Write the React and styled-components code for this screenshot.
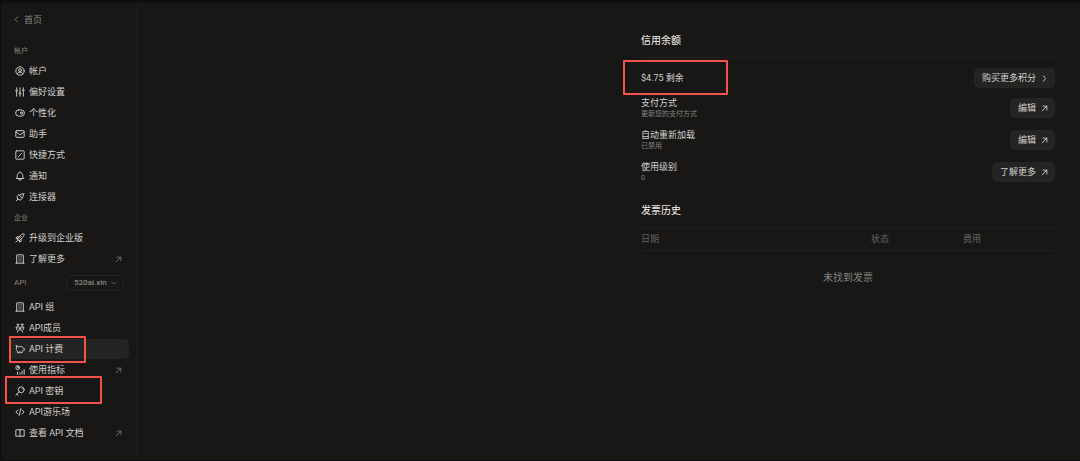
import React from "react";
import styled, { createGlobalStyle, css } from "styled-components";

const GlobalStyle = createGlobalStyle`
  * { box-sizing: border-box; }
  body {
    margin: 0;
    background: #100e13;
    color: #d2d1ce;
    font-family: Roboto, "Noto Sans CJK SC", sans-serif;
    font-size: 9px;
    line-height: 12px;
  }
  a { color: inherit; text-decoration: none; }
  ul { list-style: none; margin: 0; padding: 0; }
  h2, p { margin: 0; }
`;

const Shell = styled.div`
  display: flex;
  min-height: calc(100vh - 4px);
  margin: 3px 0 1px 1px;
  background: #181715;
  border-radius: 4px 0 0 4px;
`;

const Sidebar = styled.aside`
  flex: 0 0 136px;
  padding: 6px 7px 16px 8px;
  border-right: 1px solid #1f1e1d;
`;

const BackLink = styled.a`
  display: flex;
  align-items: center;
  gap: 3px;
  height: 21px;
  margin-bottom: 10px;
  padding-left: 3px;
  color: #8c8b88;
`;

const SectionHead = styled.div`
  display: flex;
  align-items: center;
  justify-content: space-between;
  height: ${(p) => (p.$tall ? "28px" : "21px")};
  padding: 0 5px;
  color: #858481;
  font-size: ${(p) => (p.$tall ? "8px" : "7px")};
`;

const Menu = styled.ul`
  display: grid;
  gap: 1px;
`;

const MenuItem = styled.li`
  position: relative;
`;

const MenuLink = styled.a`
  display: flex;
  align-items: center;
  gap: 4px;
  height: 20px;
  padding: 0 7px 0 6px;
  border-radius: 5px;
  color: #d2d1ce;
  white-space: nowrap;
  ${(p) => p.$active && css`background: #242423;`}
`;

const External = styled.span`
  display: flex;
  margin-left: auto;
  color: #777673;
`;

const Marker = styled.span`
  position: absolute;
  border: 2px solid #f4524d;
  border-radius: 1px;
  pointer-events: none;
  top: ${(p) => p.$top}px;
  left: ${(p) => p.$left}px;
  width: ${(p) => p.$width}px;
  height: ${(p) => p.$height}px;
`;

const SelectBox = styled.label`
  display: flex;
  align-items: center;
  width: 58px;
  height: 16px;
  padding: 0 6px 0 7px;
  border: 1px solid #252423;
  border-radius: 5px;
`;

const GroupSelect = styled.select`
  appearance: none;
  flex: 1;
  min-width: 0;
  padding: 0;
  border: 0;
  background: transparent;
  color: #858481;
  font: 500 8px/12px Roboto, sans-serif;
`;

const Main = styled.main`
  display: flex;
  flex: 1;
  justify-content: flex-end;
  min-width: 0;
  padding: 27px 25px 0;
`;

const Column = styled.div`
  width: 100%;
  max-width: 414px;
`;

const Title = styled.h2`
  height: 27px;
  padding-top: 4px;
  font-size: 10px;
  line-height: 14px;
  font-weight: 500;
  color: #dddcd9;
`;

const Balance = styled.div`
  padding: 10px 0;
  border-top: 1px solid #22211f;
`;

const Settings = styled.div`
  display: grid;
  gap: 12px;
  padding-bottom: 18px;
`;

const Row = styled.div`
  position: relative;
  display: flex;
  align-items: center;
  justify-content: space-between;
  height: 20px;
`;

const Hint = styled.p`
  color: #858481;
  font-size: 7px;
  line-height: 10px;
`;

const Button = styled.button`
  display: flex;
  align-items: center;
  gap: 5px;
  height: 20px;
  padding: 0 7px 0 8px;
  border: 0;
  border-radius: 5px;
  background: #242423;
  color: #d2d1ce;
  font: inherit;
`;

const Table = styled.table`
  width: 100%;
  table-layout: fixed;
  border-collapse: collapse;
`;

const HeadCell = styled.th`
  height: 23px;
  padding: 0;
  border: solid #22211f;
  border-width: 1px 0;
  color: #656461;
  font-weight: 400;
  text-align: left;
  width: ${(p) => p.$width || "auto"};
`;

const EmptyCell = styled.td`
  height: 54px;
  padding: 0;
  color: #858481;
  font-size: 10px;
  text-align: center;
`;

const Svg = styled.svg`
  flex: none;
  display: block;
  fill: none;
  stroke: currentColor;
  stroke-width: 2.3;
  stroke-linecap: round;
  stroke-linejoin: round;
`;

const shapes = {
  back: <path d="M15 5l-7 7 7 7" />,
  right: <path strokeWidth="3" d="M8 3l8 9-8 9" />,
  down: <path d="M3 8l9 8 9-8" />,
  external: <path strokeWidth="3" d="M4 20L20 4M7 4h13v13" />,
  user: <><circle cx="12" cy="12" r="10" /><circle cx="12" cy="10" r="3.5" /><path d="M5.5 19c1-3 3-4 6.5-4s5.5 1 6.5 4" /></>,
  sliders: <path d="M4 2v4M4 12v10M12 2v10M12 18v4M20 2v3M20 11v11M2 9a2 2 0 104 0 2 2 0 10-4 0M10 15a2 2 0 104 0 2 2 0 10-4 0M18 8a2 2 0 104 0 2 2 0 10-4 0" />,
  toggle: <><rect x="1.5" y="4.5" width="21" height="15" rx="7.5" /><circle cx="15.500" cy="12" r="2.500" /></>,
  mail: <><rect x="2" y="4" width="20" height="16" rx="2" /><path d="M2 7l10 7 10-7" /></>,
  shortcut: <><rect x="2" y="2" width="20" height="20" rx="2" /><path d="M8 16l8-8" /></>,
  bell: <path d="M10 4a2 2 0 114 0c3 1.500 4.500 4 4.500 7v3.500L21 18H3l2.500-3.500V11c0-3 1.500-5.500 4.500-7M9 18v1a3 3 0 006 0v-1" />,
  plug: <path d="M3 21l4-4M7 17c-3-3-3-6 0-9l2-2 9 9-2 2c-3 3-6 3-9 0zM11 8l3-3h6l2-2M17 14l3-4V6" />,
  rocket: <path d="M7 16l-2-2 9-9c2.500-2.500 5-3 8-3 0 3-.5 5.500-3 8l-9 9-3-3 8-8M8 9H5l-3 4 4 1M15 16v3l-4 3-1-4M2 22l4-4" />,
  building: <path d="M2 22h20M4 22V3a1 1 0 011-1h14a1 1 0 011 1v19M9 7h1M14 7h1M9 12h1M14 12h1M9 17h1M14 17h1" />,
  members: <><circle cx="7" cy="4" r="2" /><circle cx="17" cy="4" r="2" /><circle cx="12" cy="12" r="2" /><path d="M2 11l3-2h3M22 11l-3-2h-3M6 22l2-5 4-1 4 1 2 5M5 10l-1 6M19 10l1 6" /></>,
  piggy: <path d="M3 4l6 3c3-1.500 6-1.500 8.500 0 1.500 1 2.500 2 3 3.500H22v5h-2L17 18v3h-4v-2h-3v2H6v-4c-3-2-4-5-2-9z" />,
  metrics: <><circle cx="6.500" cy="6.500" r="4.500" /><path d="M6.500 2v4.500H11M6 17v5M12 19v3M17 15v7M22 11v11" /></>,
  key: <><circle cx="15" cy="9" r="7" /><path d="M10 14l-8 8M4 20l3 2M17 7h.1" /></>,
  code: <path d="M7 7l-5 5 5 5M17 7l5 5-5 5M14 4l-4 16" />,
  book: <path d="M12 5v15M12 5c-3-1.500-7-1.500-10-.5V20c3-1 7-1 10 0 3-1 7-1 10 0V4.500c-3-1-7-1-10 .5z" />,
};

const Icon = ({ name, size = 10 }) => (
  <Svg width={size} height={size} viewBox="0 0 24 24" aria-hidden="true">
    {shapes[name]}
  </Svg>
);

const account = [
  { icon: "user", label: "帐户" },
  { icon: "sliders", label: "偏好设置" },
  { icon: "toggle", label: "个性化" },
  { icon: "mail", label: "助手" },
  { icon: "shortcut", label: "快捷方式" },
  { icon: "bell", label: "通知" },
  { icon: "plug", label: "连接器" },
];

const enterprise = [
  { icon: "rocket", label: "升级到企业版" },
  { icon: "building", label: "了解更多", external: true },
];

const api = [
  { icon: "building", label: "API 组" },
  { icon: "members", label: "API成员" },
  { icon: "piggy", label: "API 计费", active: true, marker: { $top: -3, $left: 0, $width: 77, $height: 27 } },
  { icon: "metrics", label: "使用指标", external: true },
  { icon: "key", label: "API 密钥", marker: { $top: -5, $left: -4, $width: 97, $height: 28 } },
  { icon: "code", label: "API游乐场" },
  { icon: "book", label: "查看 API 文档", external: true },
];

const MenuList = ({ items }) => (
  <Menu>
    {items.map((item) => (
      <MenuItem key={item.label}>
        <MenuLink href="#" $active={item.active} aria-current={item.active ? "page" : undefined}>
          <Icon name={item.icon} />
          {item.label}
          {item.external && <External><Icon name="external" size={7} /></External>}
        </MenuLink>
        {item.marker && <Marker {...item.marker} />}
      </MenuItem>
    ))}
  </Menu>
);

const SettingRow = ({ title, hint, action, icon = "external", children }) => (
  <Row>
    <div>
      <p>{title}</p>
      {hint && <Hint>{hint}</Hint>}
    </div>
    <Button type="button">
      {action}
      <Icon name={icon} size={7} />
    </Button>
    {children}
  </Row>
);

export default function App() {
  return (
    <>
      <GlobalStyle />
      <Shell>
        <Sidebar>
          <BackLink href="#"><Icon name="back" size={9} />首页</BackLink>
          <SectionHead>帐户</SectionHead>
          <MenuList items={account} />
          <SectionHead>企业</SectionHead>
          <MenuList items={enterprise} />
          <SectionHead $tall>
            API
            <SelectBox>
              <GroupSelect aria-label="API" defaultValue="520ai.xin">
                <option>520ai.xin</option>
              </GroupSelect>
              <Icon name="down" size={6} />
            </SelectBox>
          </SectionHead>
          <MenuList items={api} />
        </Sidebar>
        <Main>
          <Column>
            <Title>信用余额</Title>
            <Balance>
              <SettingRow title="$4.75 剩余" action="购买更多积分" icon="right">
                <Marker $top={-8} $left={-18} $width={105} $height={35} />
              </SettingRow>
            </Balance>
            <Settings>
              <SettingRow title="支付方式" hint="更新您的支付方式" action="编辑" />
              <SettingRow title="自动重新加载" hint="已禁用" action="编辑" />
              <SettingRow title="使用级别" hint="0" action="了解更多" />
            </Settings>
            <Title>发票历史</Title>
            <Table>
              <thead>
                <tr>
                  <HeadCell scope="col">日期</HeadCell>
                  <HeadCell scope="col" $width="92px">状态</HeadCell>
                  <HeadCell scope="col" $width="92px">费用</HeadCell>
                </tr>
              </thead>
              <tbody>
                <tr><EmptyCell colSpan={3}>未找到发票</EmptyCell></tr>
              </tbody>
            </Table>
          </Column>
        </Main>
      </Shell>
    </>
  );
}
